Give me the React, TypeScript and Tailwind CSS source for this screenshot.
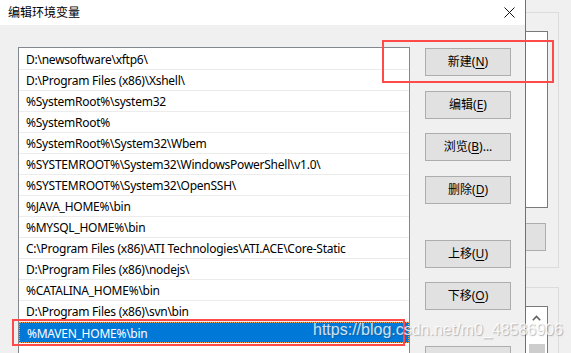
import React from "react";

const rows = [
  "D:\\newsoftware\\xftp6\\",
  "D:\\Program Files (x86)\\Xshell\\",
  "%SystemRoot%\\system32",
  "%SystemRoot%",
  "%SystemRoot%\\System32\\Wbem",
  "%SYSTEMROOT%\\System32\\WindowsPowerShell\\v1.0\\",
  "%SYSTEMROOT%\\System32\\OpenSSH\\",
  "%JAVA_HOME%\\bin",
  "%MYSQL_HOME%\\bin",
  "C:\\Program Files (x86)\\ATI Technologies\\ATI.ACE\\Core-Static",
  "D:\\Program Files (x86)\\nodejs\\",
  "%CATALINA_HOME%\\bin",
  "D:\\Program Files (x86)\\svn\\bin",
  "%MAVEN_HOME%\\bin",
];

const font = {
  fontFamily: '"Noto Sans", "Noto Sans CJK SC", sans-serif',
};

function Btn({ pre, acc, post = "", mt }: { pre: string; acc: string; post?: string; mt: string }) {
  return (
    <div
      className={`w-[86px] h-[28px] shrink-0 bg-[#e1e1e1] border border-[#adadad] flex items-center justify-center text-[12px] text-black ${mt}`}
    >
      <span className="leading-none">
        {pre}(<span className="underline underline-offset-2">{acc}</span>){post}
      </span>
    </div>
  );
}

export default function App() {
  return (
    <div className="relative w-[571px] h-[353px] overflow-hidden bg-[#f0f0f0] flex" style={font}>
      {/* Dialog */}
      <div className="w-[526px] h-full shrink-0 flex flex-col border-r border-[#717171] bg-[#f0f0f0]">
        <div className="h-[25px] shrink-0 bg-white flex items-center justify-between pl-[8px] pr-[10px]">
          <span className="text-[12px] text-black leading-none">编辑环境变量</span>
          <svg width="11" height="11" viewBox="0 0 11 11">
            <path d="M0.5 0.5 L10.5 10.5 M10.5 0.5 L0.5 10.5" stroke="#111" strokeWidth="1" />
          </svg>
        </div>
        <div className="flex pl-[18px] pt-[22px] gap-[15px]">
          <div className="w-[392px] h-[330px] shrink-0 bg-white border border-[#828790] pt-px flex flex-col">
            {rows.map((r, i) => {
              const sel = i === rows.length - 1;
              return (
                <div
                  key={i}
                  className={`h-[21px] shrink-0 flex items-center pl-[7px] text-[12px] tracking-[-0.25px] whitespace-nowrap ${
                    sel
                      ? "bg-[#0078d7] text-white border border-dotted border-[#f0a050]"
                      : "text-black border-b border-[#ececec]"
                  }`}
                >
                  <span className="leading-none pt-[2px]">{r}</span>
                </div>
              );
            })}
          </div>
          <div className="flex flex-col pt-px">
            <Btn pre="新建" acc="N" mt="" />
            <Btn pre="编辑" acc="E" mt="mt-[15px]" />
            <Btn pre="浏览" acc="B" post="..." mt="mt-[14px]" />
            <Btn pre="删除" acc="D" mt="mt-[15px]" />
            <Btn pre="上移" acc="U" mt="mt-[36px]" />
            <Btn pre="下移" acc="O" mt="mt-[14px]" />
            <div className="w-[86px] h-[28px] shrink-0 bg-[#e1e1e1] border border-[#adadad] mt-[36px]" />
          </div>
        </div>
      </div>

      {/* Background window strip */}
      <div className="flex-1 flex flex-col">
        <div className="mt-[12px] w-[33px] h-[256px] shrink-0 border-t border-r border-b border-[#dcdcdc] flex flex-col">
          <div className="mt-[18px] w-[22px] h-[177px] bg-white border-t border-r border-b border-[#7a7a7a]" />
          <div className="mt-[15px] w-[20px] h-[28px] bg-[#e1e1e1] border-t border-r border-b border-[#adadad]" />
        </div>
        <div className="mt-[19px] w-[33px] flex-1 border-t border-r border-[#dcdcdc] flex flex-col">
          <div className="mt-[18px] w-[22px] flex-1 bg-white border-t border-r border-[#7a7a7a] flex flex-col items-center">
            <svg width="9" height="6" viewBox="0 0 9 6" className="mt-[8px]">
              <path d="M0.8 5.2 L4.5 1.5 L8.2 5.2" stroke="#606060" strokeWidth="1.6" fill="none" />
            </svg>
            <div className="mt-[23px] w-[16px] flex-1 bg-[#cdcdcd]" />
          </div>
        </div>
      </div>

      {/* Annotations */}
      <div className="absolute left-[382px] top-[40px] w-[172px] h-[43px] border-2 border-[#ff4a4a]" />
      <div className="absolute left-[12px] top-[319px] w-[393px] h-[27px] border-2 border-[#ff4a4a]" />

      {/* Watermark */}
      <div
        className="absolute left-[313px] top-[322px] text-[16px] leading-none whitespace-nowrap text-white/80"
        style={{
          fontFamily: '"Liberation Sans", Arial, sans-serif',
          textShadow: "1px 1px 1px rgba(60,60,60,0.35)",
        }}
      >
        https://blog.csdn.net/m0_48586906
      </div>
    </div>
  );
}
